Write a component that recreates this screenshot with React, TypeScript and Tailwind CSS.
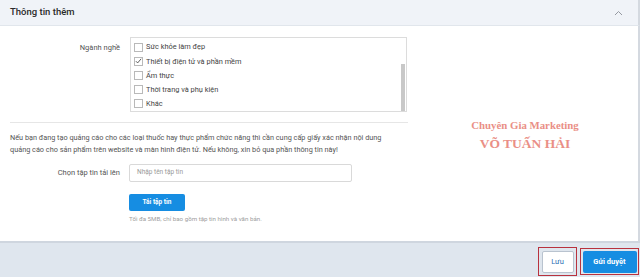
import React from 'react';

const items = [
  { label: 'Sức khỏe làm đẹp', checked: false },
  { label: 'Thiết bị điện tử và phần mềm', checked: true },
  { label: 'Ẩm thực', checked: false },
  { label: 'Thời trang và phụ kiện', checked: false },
  { label: 'Khác', checked: false },
];

function Box({ checked }: { checked: boolean }) {
  return (
    <span className="w-[9px] h-[9px] border border-[#b9b9b9] bg-white flex items-center justify-center shrink-0">
      {checked && (
        <svg width="8" height="8" viewBox="0 0 8 8" fill="none">
          <path d="M1 4.2 L3 6.2 L7 1.5" stroke="#333" strokeWidth="0.9" />
        </svg>
      )}
    </span>
  );
}

export default function App() {
  return (
    <div
      className="w-[640px] h-[277px] flex flex-col bg-white overflow-hidden"
      style={{ fontFamily: 'Roboto, "Noto Sans", sans-serif' }}
    >
      {/* header */}
      <div className="h-[26px] shrink-0 flex items-center justify-between pl-[10px] pr-[8px] bg-[#f0f3f8] border-b border-[#e1e6ec] border-r-2 border-r-[#d4d9e0]">
        <span className="text-[9.5px] font-medium text-[#2b2b2b]">Thông tin thêm</span>
        <svg width="9" height="6" viewBox="0 0 9 6" fill="none" className="mr-[7px]">
          <path d="M1 5 L4.5 1.5 L8 5" stroke="#8a8f96" strokeWidth="0.9" />
        </svg>
      </div>

      {/* body */}
      <div className="relative flex-1 flex flex-col text-[#555] border-r-2 border-[#d4d9e0]">
        <div className="flex mt-[11px]">
          <div className="w-[120px] text-right text-[7.5px] text-[#555] pt-[5px]">Ngành nghề</div>
          <div className="ml-[10px] w-[277px] h-[75px] border border-[#dcdcdc] flex">
            <div className="flex-1 flex flex-col pt-[2px] pl-[3px]">
              {items.map((it) => (
                <div key={it.label} className="h-[14.3px] flex items-center gap-[3px]">
                  <Box checked={it.checked} />
                  <span className="text-[7.4px] text-[#444] leading-none">{it.label}</span>
                </div>
              ))}
            </div>
            <div className="w-[4px] mr-[1px]">
              <div className="mt-[26px] h-[47px] bg-[#c8c8c8]" />
            </div>
          </div>
        </div>

        <div className="mt-[10px] ml-[10px] w-[398px] border-t border-[#e6e6e6]" />

        <p className="mt-[9px] px-[10px] text-[7.3px] leading-[12px] text-[#555]">
          Nếu bạn đang tạo quảng cáo cho các loại thuốc hay thực phẩm chức năng thì cần cung cấp giấy xác nhận nội dung
          <br />
          quảng cáo cho sản phẩm trên website và màn hình điện tử. Nếu không, xin bỏ qua phần thông tin này!
        </p>

        <div className="flex items-center mt-[8px]">
          <div className="w-[120px] text-right text-[7.5px] text-[#555]">Chọn tập tin tải lên</div>
          <div className="ml-[9px] w-[223px] h-[18px] border border-[#d9d9d9] rounded-[2px] flex items-center px-[7px] text-[6.5px] text-[#999]">
            Nhập tên tập tin
          </div>
        </div>

        <div className="ml-[129px] mt-[12px] w-[56px] h-[17px] bg-[#168de2] rounded-[2px] flex items-center justify-center text-white text-[6.5px] font-bold">
          Tải tập tin
        </div>
        <div className="ml-[129px] mt-[4px] text-[6.2px] text-[#a0a0a0]">
          Tối đa 5MB, chỉ bao gồm tập tin hình và văn bản.
        </div>

        {/* watermark */}
        <div
          className="absolute left-[435px] top-[94px] w-[180px] flex flex-col items-center text-[#ea8f86] font-bold leading-none"
          style={{ fontFamily: '"Liberation Serif", "DejaVu Serif", serif' }}
        >
          <span className="text-[10.8px]">Chuyên Gia Marketing</span>
          <span className="text-[13.5px] mt-[6px]">VÕ TUẤN HẢI</span>
        </div>
      </div>

      {/* footer */}
      <div className="h-[36px] shrink-0 bg-[#dfe6ee] border-t-2 border-[#cfd6df] flex items-center justify-end pr-[1px] pt-[3px]">
        <div className="border-[1.5px] border-[#b8323e] p-[2.5px] mr-[3px]">
          <div className="w-[32px] h-[22px] bg-white border border-[#b9c3cf] rounded-[2px] flex items-center justify-center text-[7.5px] text-[#2a6fb5]">
            Lưu
          </div>
        </div>
        <div className="border-[1.5px] border-[#b8323e] p-[1.5px]">
          <div className="w-[54px] h-[22px] bg-[#168de2] rounded-[2px] flex items-center justify-center text-[7.5px] font-bold text-white">
            Gửi duyệt
          </div>
        </div>
      </div>
    </div>
  );
}
